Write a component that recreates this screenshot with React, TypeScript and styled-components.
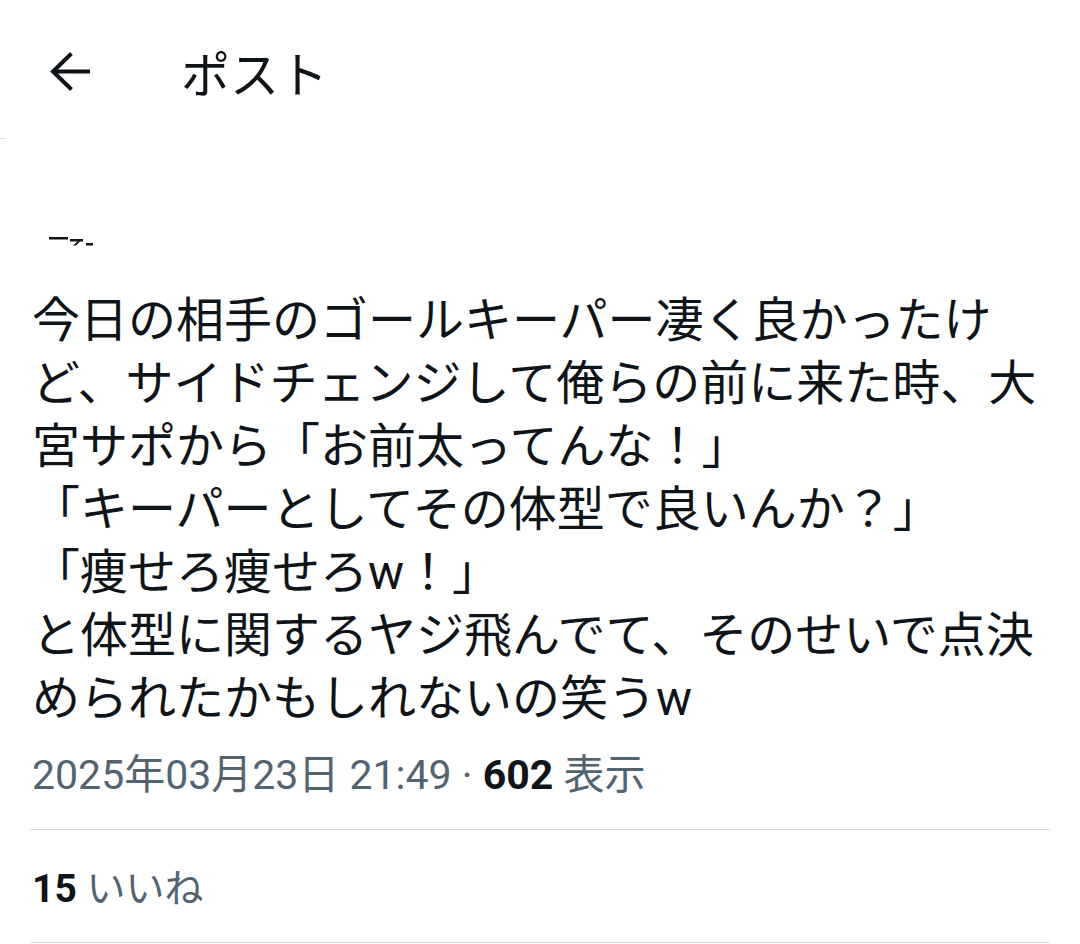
import React from "react";
import styled, { createGlobalStyle } from "styled-components";

const GlobalStyle = createGlobalStyle`
  html, body {
    margin: 0;
    padding: 0;
    background: #ffffff;
  }
  body {
    font-family: Roboto, "Noto Sans CJK JP", "Noto Sans", sans-serif;
    color: #0f1419;
  }
  * { box-sizing: border-box; }
`;

const Page = styled.div`
  width: 1080px;
  min-height: 944px;
  background: #ffffff;
  display: flex;
  flex-direction: column;
  overflow: hidden;
`;

const Header = styled.header`
  display: flex;
  align-items: center;
  height: 138px;
  padding: 6px 0 0 50px;
`;

const BackButton = styled.button`
  display: flex;
  align-items: center;
  justify-content: center;
  width: 42px;
  height: 40px;
  padding: 0;
  border: none;
  background: transparent;
  color: #0f1419;
  cursor: pointer;
`;

const Title = styled.h1`
  margin: 0 0 0 89px;
  font-family: "Noto Sans CJK JP", sans-serif;
  font-size: 49px;
  font-weight: 400;
  line-height: 60px;
  color: #0f1419;
`;

const HeaderStub = styled.div`
  width: 6px;
  height: 1px;
  background: #dcdcdc;
`;

const AuthorSnippet = styled.div`
  margin: 97px 0 0 48px;
  height: 12px;
  display: flex;
`;

const Content = styled.div`
  padding: 0 30px 0 32px;
  display: flex;
  flex-direction: column;
`;

const PostText = styled.p`
  margin: 41px 0 0 0;
  font-family: Roboto, "Noto Sans CJK JP", sans-serif;
  font-size: 48px;
  line-height: 63px;
  font-weight: 400;
  color: #0f1419;
  white-space: pre-wrap;
  line-break: strict;
`;

const MetaLine = styled.div`
  margin-top: 17px;
  font-family: Roboto, "Noto Sans CJK JP", sans-serif;
  font-size: 41px;
  line-height: 56px;
  color: #536471;
  white-space: nowrap;
`;

const Strong = styled.span`
  font-weight: 700;
  color: #0f1419;
`;

const Divider = styled.hr<{ $gap: number }>`
  margin: ${(p) => p.$gap}px 0 0 -2px;
  border: none;
  height: 1px;
  width: 1020px;
  background: #cfd9de;
`;

const StatsLine = styled.div`
  margin-top: 31px;
  font-family: Roboto, "Noto Sans CJK JP", sans-serif;
  font-size: 39px;
  line-height: 56px;
  color: #536471;
  white-space: nowrap;
`;

const BackArrow = () => (
  <svg width="42" height="40" viewBox="0 0 42 40" fill="none">
    <path
      d="M40 19.5H3M21.5 1.5L3 19.5L21.5 37.5"
      stroke="#0f1419"
      strokeWidth="4"
      strokeLinecap="butt"
      strokeLinejoin="miter"
    />
  </svg>
);

const Snippet = () => (
  <svg width="46" height="12" viewBox="0 0 46 12">
    <rect x="1" y="1" width="19" height="2.5" fill="#0f1419" />
    <rect x="22" y="3" width="13" height="2.5" fill="#0f1419" />
    <path d="M30 5L25 9.5H28L32.5 5Z" fill="#0f1419" />
    <rect x="38" y="7" width="7" height="2.5" fill="#0f1419" />
  </svg>
);

const text =
  "今日の相手のゴールキーパー凄く良かったけど、サイドチェンジして俺らの前に来た時、大宮サポから「お前太ってんな！」\n「キーパーとしてその体型で良いんか？」\n「痩せろ痩せろw！」\nと体型に関するヤジ飛んでて、そのせいで点決められたかもしれないの笑うw";

export default function App() {
  return (
    <>
      <GlobalStyle />
      <Page>
        <Header>
          <BackButton aria-label="戻る">
            <BackArrow />
          </BackButton>
          <Title>ポスト</Title>
        </Header>
        <HeaderStub />
        <AuthorSnippet>
          <Snippet />
        </AuthorSnippet>
        <Content>
          <PostText>{text}</PostText>
          <MetaLine>
            2025年03月23日 21:49 · <Strong>602</Strong> 表示
          </MetaLine>
          <Divider $gap={26} />
          <StatsLine>
            <Strong>15</Strong> いいね
          </StatsLine>
          <Divider $gap={25} />
        </Content>
      </Page>
    </>
  );
}
